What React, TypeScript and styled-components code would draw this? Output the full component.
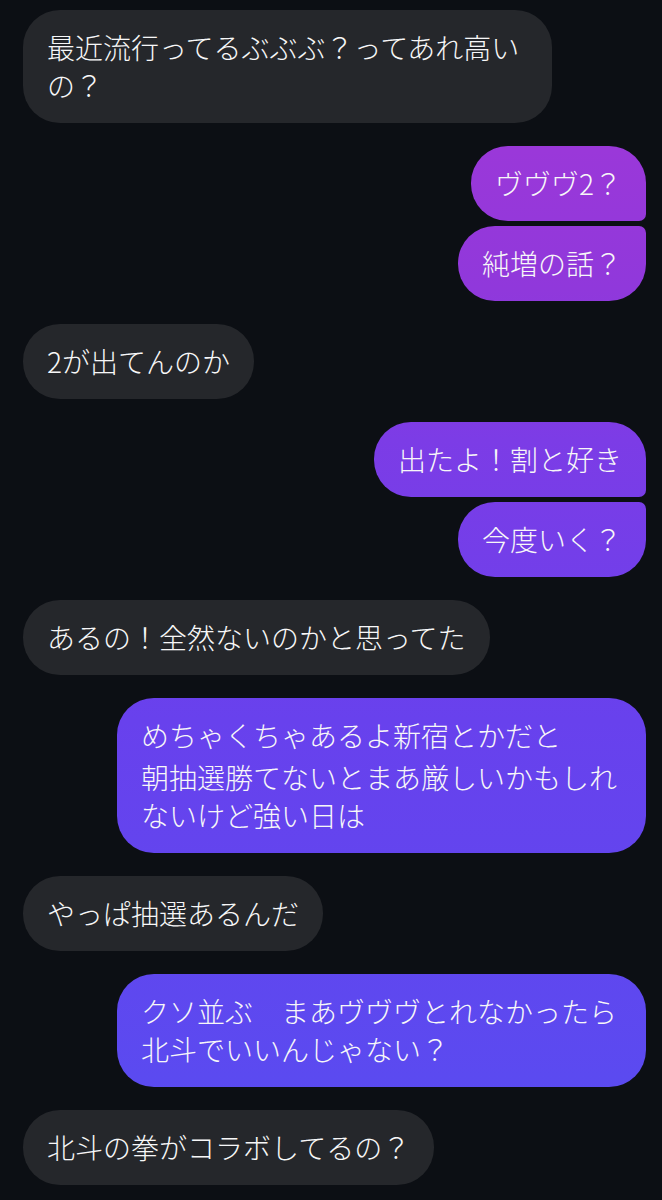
import React from "react";
import styled, { createGlobalStyle, css } from "styled-components";

const GlobalStyle = createGlobalStyle`
  html, body {
    margin: 0;
    padding: 0;
    background: #0c0f14;
  }
  * { box-sizing: border-box; }
`;

const Thread = styled.div`
  display: flex;
  flex-direction: column;
  gap: 23px;
  padding: 10px 16px 20px 23px;
  font-family: "Noto Sans CJK JP", "Noto Sans", sans-serif;
`;

const Group = styled.div<{ $mine: boolean }>`
  display: flex;
  flex-direction: column;
  gap: 5px;
  align-items: ${(p) => (p.$mine ? "flex-end" : "flex-start")};
`;

type Pos = "single" | "first" | "last" | "middle";

const Bubble = styled.div<{ $mine: boolean; $pos: Pos }>`
  max-width: 529px;
  padding: 18px 24px 19px;
  font-size: 28px;
  font-weight: 300;
  line-height: 38px;
  color: #f7f7f8;
  border-radius: 37px;
  background: #25272b;
  ${(p) =>
    p.$mine &&
    css`
      background: linear-gradient(
          to bottom,
          #a236d5 0px,
          #9a38d9 150px,
          #9038db 290px,
          #7c3ce6 440px,
          #6841ed 720px,
          #5b4af0 1075px,
          #574cf2 1200px
        )
        fixed;
    `}
  ${(p) =>
    p.$mine &&
    (p.$pos === "first" || p.$pos === "middle") &&
    css`
      border-bottom-right-radius: 7px;
    `}
  ${(p) =>
    p.$mine &&
    (p.$pos === "last" || p.$pos === "middle") &&
    css`
      border-top-right-radius: 7px;
    `}
`;

const Para = styled.p`
  margin: 0;
  & + & {
    margin-top: 4px;
  }
`;

type Msg = { mine: boolean; lines: string[] };

const groups: Msg[] = [
  { mine: false, lines: ["最近流行ってるぶぶぶ？ってあれ高いの？"] },
  { mine: true, lines: ["ヴヴヴ2？", "純増の話？"] },
  { mine: false, lines: ["2が出てんのか"] },
  { mine: true, lines: ["出たよ！割と好き", "今度いく？"] },
  { mine: false, lines: ["あるの！全然ないのかと思ってた"] },
  {
    mine: true,
    lines: ["めちゃくちゃあるよ新宿とかだと\n朝抽選勝てないとまあ厳しいかもしれないけど強い日は"],
  },
  { mine: false, lines: ["やっぱ抽選あるんだ"] },
  { mine: true, lines: ["クソ並ぶ　まあヴヴヴとれなかったら北斗でいいんじゃない？"] },
  { mine: false, lines: ["北斗の拳がコラボしてるの？"] },
];

function posOf(i: number, n: number): Pos {
  if (n === 1) return "single";
  if (i === 0) return "first";
  if (i === n - 1) return "last";
  return "middle";
}

export default function App() {
  return (
    <>
      <GlobalStyle />
      <Thread>
        {groups.map((g, gi) => (
          <Group key={gi} $mine={g.mine}>
            {g.lines.map((t, i) => (
              <Bubble key={i} $mine={g.mine} $pos={posOf(i, g.lines.length)}>
                {t.split("\n").map((para, pi) => (
                  <Para key={pi}>{para}</Para>
                ))}
              </Bubble>
            ))}
          </Group>
        ))}
      </Thread>
    </>
  );
}
